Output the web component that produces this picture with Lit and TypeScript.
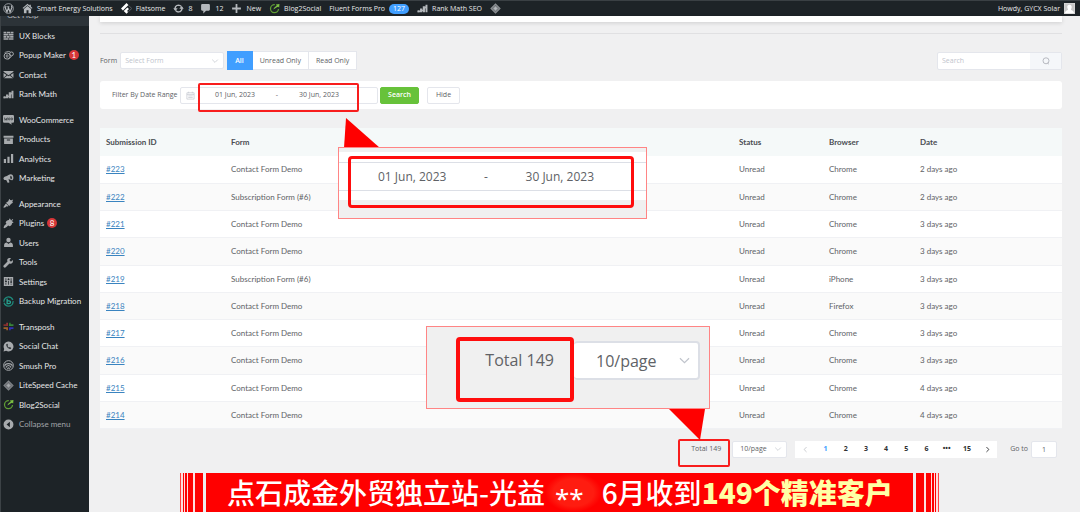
import { LitElement, html, css, svg, type TemplateResult } from "lit";
import { customElement, property } from "lit/decorators.js";

const glyphs: Record<string, TemplateResult> = {
  wordpress: svg`<circle cx="10" cy="10" r="8.8" fill="none" stroke="currentColor" stroke-width="1.4"/><path d="M3.600 7.400 7.200 16.600 10 8.800 12.900 16.600 16.300 7.600 15.200 4.600M2.800 6.800h3.600M7.600 6.800h4M10 8.800 9.200 6.800" fill="none" stroke="currentColor" stroke-width="2.200"/>`,
  home: svg`<path d="M10 1.500 1 9l1.200 1.400L10 4l7.800 6.400L19 9l-3-2.500V3h-2.500v1.400zM10 5.600l-6.500 5.300V18.500h4.700V13h3.600v5.500h4.700v-7.600z"/>`,
  flatsome: svg`<path d="M10 0 0 10l3.500 3.500L13.500 3.500zM11.500 8 5 14.500l5 5 3-3-2-2 3.500-3.500z" fill="#fff"/><path d="m14 4.500 5.500 5.500-6 6" fill="none" stroke="currentColor" stroke-width="1.500" opacity=".5"/>`,
  update: svg`<path d="M4.200 12.800A6.500 6.500 0 0 1 10 3.800c2 0 3.800.9 5 2.400M15.800 7.200A6.500 6.500 0 0 1 10 16.200c-2 0-3.800-.9-5-2.400" fill="none" stroke="currentColor" stroke-width="2.600"/><path d="M.5 9.500h8l-4 5zM19.500 10.500h-8l4-5z"/>`,
  comment: svg`<path d="M4 2h12a2 2 0 0 1 2 2v8a2 2 0 0 1-2 2h-5l-5 5v-5H4a2 2 0 0 1-2-2V4a2 2 0 0 1 2-2z"/>`,
  plus: svg`<path d="M8.400 2h3.200v6.400H18v3.200h-6.400V18H8.400v-6.400H2V8.400h6.400z"/>`,
  b2s: svg`<path d="M10.500 3A7.300 7.300 0 1 0 17.300 11" fill="none" stroke="#5f9e35" stroke-width="2.300"/><path d="M8 12c1-3 3-5.500 6-6.800L12.600 2.800 19 2l-.5 6.300-2-1.700C13.500 7.500 11 9.500 8 12z" fill="#7cc142"/>`,
  rank: svg`<path d="M1 13h4v4H1zM5.500 10h4v7h-4zM10.500 6h4v11h-4zM15.500 3H19v14h-3.500z"/><path d="M1 16c7 .5 12-3 16.500-11" fill="none" stroke="currentColor" stroke-width="2"/>`,
  diamond: svg`<path d="M10 .5 19.500 10 10 19.500.5 10z" opacity=".75"/><path d="m10 4 6 6-6 6-6-6z" fill="none" stroke="#1d2327" stroke-width=".9" opacity=".6"/><path d="m10 7 3 3-3 3-3-3z"/>`,
  blocks: svg`<path d="M1 3h5v3H1zM7 3h6v3H7zM14 3h5v3h-5zM1 7h8v3H1zM10 7h9v3h-9zM1 11h5v3H1zM7 11h5v3H7zM13 11h6v3h-6zM1 15h9v2.500H1zM11 15h8v2.500h-8z"/>`,
  popup: svg`<circle cx="7.500" cy="11" r="5.600" fill="none" stroke="currentColor" stroke-width="1.800"/><circle cx="15.500" cy="7" r="3.400" fill="none" stroke="currentColor" stroke-width="1.800"/><path d="M3 4.500 9 2.500 13 3M9 17l7-5.500M6 9h3v4H6z" fill="none" stroke="currentColor" stroke-width="1.400"/>`,
  mail: svg`<path d="M1 3.500h18v1.600l-9 6.400-9-6.400zM1 7.200 6.500 11 1 16zM19 7.200 13.500 11l5.500 5zM7.800 12 10 13.400 12.200 12l6 5H1.800z"/>`,
  woo: svg`<path d="M2 2h16a2 2 0 0 1 2 2v10a2 2 0 0 1-2 2h-3l1 3.500L10 16H2a2 2 0 0 1-2-2V4a2 2 0 0 1 2-2z"/><path d="m2.500 6.500 1.200 5L6 8l1 3.500 1-5" fill="none" stroke="#1d2327" stroke-width="1.100"/><circle cx="11.300" cy="9" r="1.700" fill="none" stroke="#1d2327" stroke-width="1.100"/><circle cx="16" cy="9" r="1.700" fill="none" stroke="#1d2327" stroke-width="1.100"/>`,
  products: svg`<path d="M1 3h18v4H1zM2 8.200h16V18H2zM7 10v2h6v-2z" fill-rule="evenodd"/>`,
  chart: svg`<path d="M1.500 11h4v7h-4zM8 7h4v11H8zM14.500 2h4v16h-4z"/>`,
  megaphone: svg`<path d="M17.500 3.500c2 3 2 8-.5 9.500-2 1-4-2-7-1.500l1.800 5.500-3 1.200-3-5.700C3 13.500.8 12 .8 10c0-2.500 2.500-3.500 5-4.200C9.500 4.600 13 .2 17.500 3.500zM14 5c-1.500 1.500-1 5.500 1 6.500 1.800-.5 1.800-5-1-6.500z" fill-rule="evenodd"/>`,
  brush: svg`<path d="m11.500 1.500 1.500 2 2 .5 3.500-1.500-1.500 4 1 2-3.500 2.500-3 3.500-2-2-2-2-2-2 4-2.500zM5.500 10.200l4.500 4.500c-1 .8-2 .6-2.800.2-2 .6-3.500 3.300-6.200 2.800-.5-2.700 2.200-3.700 2.800-5.700z"/>`,
  plug: svg`<path d="m11 2 1.600-1 2.200 3.400 2.600-2.600 1.200 1.200-2.600 2.600L19 7.800l-1 1.600-1.600-.8c.3 3-1.600 5.600-4.400 6.400L9.500 13.800 6 17l-3.800 1.600L1 17.400 2.600 13.800 6.200 10.500 4.800 8C5.600 5.200 8.200 3.300 11.200 3.600z"/>`,
  user: svg`<circle cx="10" cy="5.500" r="4"/><path d="M2 18v-3.500C2 11.500 5 10 7 10l3 2.500L13 10c2 0 5 1.500 5 4.500V18z"/>`,
  wrench: svg`<path d="M17.500 5.500 14.500 8.500 11.500 5.500 14.500 2.500C12 .8 9 1.800 8 4.200c-.6 1.500-.4 2.900.2 4L1.500 15a2.300 2.300 0 0 0 3.500 3.500L11.800 11.800c4.200 1.700 7.700-2.300 5.700-6.300z"/>`,
  settings: svg`<path d="M1.500 2h17v16h-17zM6 4H4.600v5H3.800v2.200H7V9h-1zM6 12.500H4.600V16H6zM10.700 4H9.300v1H8.500v2.200h3.200V5h-1zM10.700 8.500H9.300V16h1.400zM15.400 4H14v6h-.8v2.200h3.200V10h-1zM15.400 13.500H14V16h1.400z" fill-rule="evenodd"/>`,
  backup: svg`<circle cx="10" cy="10" r="8.300" fill="none" stroke="#1f8a7b" stroke-width="2.400" stroke-dasharray="23 2"/><path d="M7.500 5v9h3.500a2.600 2.600 0 0 0 0-5.200H7.500" fill="none" stroke="#25a18f" stroke-width="2.400"/>`,
  transposh: svg`<path d="M6 3h3v6H6z" fill="#a03a3a"/><path d="M1 6h8v3H1z" fill="#8c2f2f"/><path d="M11 3h3v6h-3z" fill="#317a34"/><path d="M11 6h8v3h-8z" fill="#3c8b3c"/><path d="M1 11.500h8v3H1zM6 11.500h3V17H6z" fill="#a0602c"/><path d="M11 11.500h8v3h-8zM11 11.500h3V17h-3z" fill="#3232b8"/>`,
  chat: svg`<path d="M10 1a9 9 0 1 1-4.300 16.900L1 19l1.200-4.600A9 9 0 0 1 10 1zM6.500 5.500C4.500 9 9 15 13.500 14.500l1.500-2-2.800-1.600-1.200 1.200C9.500 11.500 8.300 10 8 8.800L9 7.500 8 5z" fill-rule="evenodd"/>`,
  smush: svg`<circle cx="10" cy="10" r="8.800" fill="none" stroke="currentColor" stroke-width="1.800"/><path d="M3 11.500c1-6.500 13-6.500 14 0M5.500 14c1-5.500 8-5.500 9 0M8.300 16.500c.3-3 3.100-3 3.400 0" fill="none" stroke="currentColor" stroke-width="1.900"/>`,
  collapse: svg`<path d="M10 1a9 9 0 1 1 0 18 9 9 0 0 1 0-18zM12.500 5.200 6.500 10l6 4.800z" fill-rule="evenodd"/>`,
  chevron: svg`<path d="m3 6.500 7 7 7-7" fill="none" stroke="currentColor" stroke-width="1.800"/>`,
  left: svg`<path d="m13 3-7 7 7 7" fill="none" stroke="currentColor" stroke-width="2"/>`,
  right: svg`<path d="m7 3 7 7-7 7" fill="none" stroke="currentColor" stroke-width="2.600"/>`,
  search: svg`<circle cx="10" cy="9.500" r="7.500" fill="none" stroke="currentColor" stroke-width="2"/><path d="m14 15 3 3" stroke="currentColor" stroke-width="2"/>`,
  calendar: svg`<path d="M2 4h16v14H2zM2 8h16M6 1.500V5M14 1.500V5M5 11h10M5 14.500h10" fill="none" stroke="currentColor" stroke-width="1.500"/>`,
  avatar: svg`<path d="M0 0h20v20H0z" fill="#c6c6c6"/><path d="M0 0h20v20H0z" fill="none" stroke="#dedede" stroke-width="2"/><path d="M10 3c3 0 4.200 2 4 4.500-.2 2-1 3-1.500 3.700.2 2 4.500 1.800 5.500 5.800v1.500H2V17c1-4 5.300-3.800 5.500-5.800C7 10.500 6.200 9.500 6 7.500 5.800 5 7 3 10 3z" fill="#fff"/>`,
};

@customElement("ui-icon")
class UiIcon extends LitElement {
  @property() name = "";
  static styles = css`
    :host { display: inline-flex; flex: none; width: 11px; height: 11px; }
    .glyph { width: 100%; height: 100%; fill: currentColor; }
  `;
  render() {
    return html`<svg class="glyph" viewBox="0 0 20 20" aria-hidden="true">${glyphs[this.name]}</svg>`;
  }
}

type MenuItem = { icon: string; label: string; badge?: string; dim?: boolean };

const menu: MenuItem[][] = [
  [
    { icon: "blocks", label: "UX Blocks" },
    { icon: "popup", label: "Popup Maker", badge: "1" },
    { icon: "mail", label: "Contact" },
    { icon: "rank", label: "Rank Math" },
  ],
  [
    { icon: "woo", label: "WooCommerce" },
    { icon: "products", label: "Products" },
    { icon: "chart", label: "Analytics" },
    { icon: "megaphone", label: "Marketing" },
  ],
  [
    { icon: "brush", label: "Appearance" },
    { icon: "plug", label: "Plugins", badge: "8" },
    { icon: "user", label: "Users" },
    { icon: "wrench", label: "Tools" },
    { icon: "settings", label: "Settings" },
    { icon: "backup", label: "Backup Migration" },
  ],
  [
    { icon: "transposh", label: "Transposh" },
    { icon: "chat", label: "Social Chat" },
    { icon: "smush", label: "Smush Pro" },
    { icon: "diamond", label: "LiteSpeed Cache" },
    { icon: "b2s", label: "Blog2Social" },
    { icon: "collapse", label: "Collapse menu", dim: true },
  ],
];

const demo = "Contact Form Demo";
const subscription = "Subscription Form (#6)";
const rows: [string, string, string, string][] = [
  ["#223", demo, "Chrome", "2 days ago"],
  ["#222", subscription, "Chrome", "2 days ago"],
  ["#221", demo, "Chrome", "3 days ago"],
  ["#220", demo, "Chrome", "3 days ago"],
  ["#219", subscription, "iPhone", "3 days ago"],
  ["#218", demo, "Firefox", "3 days ago"],
  ["#217", demo, "Chrome", "3 days ago"],
  ["#216", demo, "Chrome", "3 days ago"],
  ["#215", demo, "Chrome", "4 days ago"],
  ["#214", demo, "Chrome", "4 days ago"],
];

@customElement("app-root")
class AppRoot extends LitElement {
  static styles = css`
    :host {
      display: flex;
      flex-direction: column;
      position: relative;
      height: 100vh;
      overflow: hidden;
      background: #f0f0f1;
      color: #606266;
      font: 7px/10px "Open Sans", "Noto Sans", sans-serif;
    }
    * { box-sizing: border-box; }
    a { color: inherit; text-decoration: none; }
    button, input, select { font: inherit; color: inherit; margin: 0; border-radius: 2px; }
    input, select { min-width: 0; appearance: none; outline: none; }
    button { padding: 0; cursor: pointer; }

    .topbar {
      display: flex;
      align-items: center;
      flex: none;
      height: 16px;
      padding: 0 5px 0 3px;
      gap: 8px;
      background: #1d2327;
      border-top: 1px solid #3a4044;
      color: #e8e9ea;
    }
    .topbar a { display: flex; align-items: center; gap: 4px; white-space: nowrap; }
    .topbar ui-icon { color: #b4b8bc; }
    .topbar .me { margin-left: auto; }
    .count { padding: 0 4px; border-radius: 5px; background: #409eff; color: #fff; }

    .body { display: flex; flex: 1; min-height: 0; }
    .side {
      flex: none;
      width: 89px;
      background: #1d2327;
      border-left: 1px solid #3c4246;
      color: #e6e7e8;
      font-family: Lato, "Open Sans", sans-serif;
      font-size: 8px;
    }
    .submenu { height: 10px; overflow: hidden; background: #2c3338; }
    .submenu a { display: block; margin-top: -6px; padding-left: 6px; color: #b4b8bc; }
    .menu { list-style: none; margin: 0 0 6px; padding: 0; }
    .menu li { height: 19px; }
    .menu li:nth-child(even) { height: 20px; }
    .menu a { display: flex; align-items: center; height: 100%; padding-left: 2px; gap: 5px; white-space: nowrap; }
    .menu ui-icon { color: #a7aaad; }
    .menu .dim { color: #a0a4a8; }
    .badge {
      width: 10px;
      height: 10px;
      margin-left: -2px;
      border-radius: 5px;
      background: #d63638;
      color: #fff;
      text-align: center;
    }

    .main { flex: 1; min-width: 0; padding: 0 18px 0 11px; }
    .strip { height: 6px; background: #fff; box-shadow: 0 1px 4px rgba(0, 0, 0, 0.14); }
    .rule { height: 1px; margin: 11px 0 17px; border: 0; background: #e0e0e2; }

    .tools { display: flex; align-items: center; height: 19px; gap: 3px; }
    .tools label { flex: none; }
    .picker { position: relative; display: flex; align-items: center; }
    .picker select { width: 100%; height: 17px; padding: 0 4px; border: 1px solid #e4e6ec; background: #fff; }
    .picker ui-icon { position: absolute; right: 5px; width: 8px; height: 8px; color: #c0c4cc; pointer-events: none; }
    .forms { width: 104px; color: #c0c4cc; }
    .seg { display: flex; }
    .seg button { height: 19px; padding: 0 7px; border: 1px solid #e4e6ec; border-left-width: 0; border-radius: 0; background: #fff; }
    .seg .on { padding: 0 8px; background: #409eff; border-color: #409eff; color: #fff; font-weight: 600; }
    .find { display: flex; width: 125px; height: 18px; margin-left: auto; border: 1px solid #e4e6ec; border-radius: 2px; background: #fff; }
    .find input { flex: 1; padding: 0 4px; border: 0; background: none; }
    .find button { display: grid; place-items: center; width: 31px; border: 0; border-radius: 0; background: #f5f7fa; color: #a8abb2; }
    .find ui-icon { width: 8px; height: 8px; }
    ::placeholder { color: #c0c4cc; opacity: 1; }

    .range { display: flex; align-items: center; height: 28px; margin: 11px 0 19px; padding-left: 12px; border-radius: 3px; background: #fff; }
    .range .name { flex: none; width: 68px; white-space: nowrap; }
    .dates { display: flex; align-items: center; width: 198px; height: 17px; padding-left: 5px; border: 1px solid #e4e6ec; border-radius: 2px; }
    .dates ui-icon { width: 9px; height: 9px; margin-right: 2px; color: #c0c4cc; }
    .dates input { width: 76px; padding: 0; border: 0; background: none; text-align: center; }
    .dates span { width: 8px; text-align: center; }
    .go, .hide { height: 17px; border: 1px solid #67c23a; background: #67c23a; color: #fff; font-weight: 600; width: 39px; margin-left: 2px; }
    .hide { width: 33px; margin-left: 8px; border-color: #e4e6ec; background: #fff; color: #606266; font-weight: 400; }

    table { width: 100%; border-collapse: collapse; table-layout: fixed; font-family: Lato, "Open Sans", sans-serif; font-size: 8px; }
    th, td { padding: 0 6px; text-align: left; white-space: nowrap; }
    th { height: 28px; background: #f5f9f9; color: #4a4d52; font-weight: 700; }
    td { height: 27px; background: #fff; border-bottom: 1px solid #f0f1f4; }
    tr:nth-child(4n) td { height: 28px; }
    tbody tr:nth-child(even) td { background: #fafafa; }
    td a { color: #3a84c0; text-decoration: underline; }
    .c-id { width: 125px; }
    .c-status { width: 90px; }
    .c-browser { width: 91px; }
    .c-date { width: 148px; }

    .pages { display: flex; align-items: center; justify-content: flex-end; height: 17px; margin-top: 12px; padding-right: 5px; }
    .pages .size { width: 55px; margin: 0 8px 0 11px; }
    .pages .size select { padding: 0 7px; }
    .pager { display: flex; align-items: center; height: 17px; width: 202px; margin-right: 13px; background: #fff; color: #303133; font-weight: 700; }
    .pager button { flex: 1; height: 17px; display: grid; place-items: center; border: 0; background: none; }
    .pager ui-icon { width: 7px; height: 7px; }
    .pager .on { color: #409eff; }
    .pager .off { color: #b4b7bd; }
    .jump { width: 26px; height: 17px; margin-left: 3px; padding: 0; border: 1px solid #e4e6ec; background: #fff; text-align: center; }

    .mark { position: absolute; border: 2px solid #f81d1d; border-radius: 2px; pointer-events: none; }
    .mark-dates { left: 198px; top: 83px; width: 161px; height: 29px; }
    .mark-total { left: 678px; top: 439px; width: 52px; height: 28px; }
    .arrow { position: absolute; fill: #f00; }
    .arrow-up { left: 343px; top: 118px; width: 37px; height: 30px; }
    .arrow-down { left: 669px; top: 409px; width: 36px; height: 31px; }
    .callout { position: absolute; display: flex; border: 1px solid #ff8585; background: #f0f0f0; }
    .zoom-dates {
      left: 338px;
      top: 147px;
      width: 309px;
      height: 72px;
      padding: 8px 0 0 9px;
      background: linear-gradient(#f0f0f0 4px, #fff 4px 14px, #dcdfe6 14px 15px, #fff 15px 42px, #dcdfe6 42px 43px, #fff 43px 52px, #f0f0f0 52px);
      font-size: 12px;
      line-height: 20px;
    }
    .frame { border: 3px solid #ff0d0d; border-radius: 4px; }
    .zoom-dates .frame { display: flex; width: 286px; height: 52px; padding: 8px 37px 0 27px; }
    .zoom-dates .sep { flex: 1; text-align: center; }
    .zoom-total { left: 426px; top: 326px; width: 284px; height: 83px; padding: 10px 9px 0 29px; font-size: 16px; line-height: 24px; }
    .zoom-total .frame { width: 118px; height: 65px; padding: 7px 16px 0; border-width: 4px; text-align: right; white-space: nowrap; }
    .zoom-total .picker { flex: 1; height: 39px; margin-top: 4px; }
    .zoom-total select { height: 39px; padding: 0 22px; border-color: #dcdfe6; border-width: 2px; border-left: 0; border-radius: 4px; }
    .zoom-total ui-icon { right: 9px; width: 13px; height: 13px; }

    .banner {
      position: absolute;
      left: 180px;
      right: 141px;
      bottom: 0;
      display: flex;
      height: 39px;
      color: #fff;
      font: 500 28px/38px "Noto Sans CJK SC", sans-serif;
      white-space: nowrap;
    }
    .bars { flex: none; width: 26px; background: linear-gradient(90deg, #ff4040 1px, #fdd 1px 3px, red 3px 4px, #fdd 4px 5px, red 5px 7px, #fdd 7px 8px, red 8px 13px, #fdd 13px 15px, red 15px 23px, #eee 23px 26px); }
    .bars.flip { transform: scaleX(-1); }
    .headline { display: flex; flex: 1; margin: 0; padding-left: 21px; background: #f00; font: inherit; }
    .masked { padding: 6px 18px 0 10px; background: radial-gradient(closest-side, #ff1c10 70%, #f00); font-family: "Noto Sans", sans-serif; font-weight: 400; font-size: 26px; }
    .strong { color: #ffffa6; font-weight: 900; }
  `;

  render() {
    return html`
      <header class="topbar">
        <a href="#" aria-label="WordPress"><ui-icon name="wordpress"></ui-icon></a>
        <a href="#"><ui-icon name="home"></ui-icon>Smart Energy Solutions</a>
        <a href="#"><ui-icon name="flatsome"></ui-icon>Flatsome</a>
        <a href="#"><ui-icon name="update"></ui-icon>8</a>
        <a href="#"><ui-icon name="comment"></ui-icon>12</a>
        <a href="#"><ui-icon name="plus"></ui-icon>New</a>
        <a href="#"><ui-icon name="b2s"></ui-icon>Blog2Social</a>
        <a href="#">Fluent Forms Pro <span class="count">127</span></a>
        <a href="#"><ui-icon name="rank"></ui-icon>Rank Math SEO</a>
        <a href="#" aria-label="LiteSpeed"><ui-icon name="diamond"></ui-icon></a>
        <a class="me" href="#">Howdy, GYCX Solar<ui-icon name="avatar"></ui-icon></a>
      </header>
      <div class="body">
        <nav class="side">
          <div class="submenu"><a href="#">Get Help</a></div>
          ${menu.map((group) => html`<ul class="menu">
            ${group.map((item) => html`<li><a class=${item.dim ? "dim" : ""} href="#">
              <ui-icon name=${item.icon}></ui-icon><span>${item.label}</span>
              ${item.badge ? html`<span class="badge">${item.badge}</span>` : ""}
            </a></li>`)}
          </ul>`)}
        </nav>
        <main class="main">
          <div class="strip"></div>
          <hr class="rule" />
          <div class="tools">
            <label for="form">Form</label>
            <div class="picker forms">
              <select id="form"><option>Select Form</option></select>
              <ui-icon name="chevron"></ui-icon>
            </div>
            <div class="seg">
              <button class="on">All</button><button>Unread Only</button><button>Read Only</button>
            </div>
            <div class="find">
              <input type="text" placeholder="Search" aria-label="Search entries" />
              <button aria-label="Search"><ui-icon name="search"></ui-icon></button>
            </div>
          </div>
          <div class="range">
            <label class="name" for="from">Filter By Date Range</label>
            <div class="dates">
              <ui-icon name="calendar"></ui-icon>
              <input id="from" type="text" .value=${"01 Jun, 2023"} />
              <span>-</span>
              <input type="text" aria-label="End date" .value=${"30 Jun, 2023"} />
            </div>
            <button class="go">Search</button>
            <button class="hide">Hide</button>
          </div>
          <table>
            <thead>
              <tr>
                <th class="c-id">Submission ID</th><th>Form</th><th class="c-status">Status</th>
                <th class="c-browser">Browser</th><th class="c-date">Date</th>
              </tr>
            </thead>
            <tbody>
              ${rows.map(([id, form, browser, date]) => html`<tr>
                <td><a href="#">${id}</a></td><td>${form}</td><td>Unread</td><td>${browser}</td><td>${date}</td>
              </tr>`)}
            </tbody>
          </table>
          <div class="pages">
            <span>Total 149</span>
            <div class="picker size">
              <select aria-label="Page size"><option>10/page</option></select>
              <ui-icon name="chevron"></ui-icon>
            </div>
            <div class="pager">
              <button class="off" aria-label="Previous"><ui-icon name="left"></ui-icon></button>
              ${["1", "2", "3", "4", "5", "6", "•••", "15"].map((p) => html`<button class=${p === "1" ? "on" : ""}>${p}</button>`)}
              <button aria-label="Next"><ui-icon name="right"></ui-icon></button>
            </div>
            <label for="page">Go to</label>
            <input class="jump" id="page" type="text" .value=${"1"} />
          </div>
        </main>
      </div>

      <div class="mark mark-dates"></div>
      <div class="mark mark-total"></div>
      <svg class="arrow arrow-up" viewBox="0 0 37 30"><path d="M3 0 37 30H1z" /></svg>
      <div class="callout zoom-dates">
        <div class="frame"><span>01 Jun, 2023</span><span class="sep">-</span><span>30 Jun, 2023</span></div>
      </div>
      <div class="callout zoom-total">
        <div class="frame">Total 149</div>
        <div class="picker">
          <select aria-label="Page size, enlarged"><option>10/page</option></select>
          <ui-icon name="chevron"></ui-icon>
        </div>
      </div>
      <svg class="arrow arrow-down" viewBox="0 0 36 31"><path d="M0 0h36l-5 31z" /></svg>
      <div class="banner">
        <div class="bars"></div>
        <h1 class="headline">
          <span>点石成金外贸独立站-光益</span><span class="masked">**</span>
          <span>6月收到<span class="strong">149个精准客户</span></span>
        </h1>
        <div class="bars flip"></div>
      </div>
    `;
  }
}
